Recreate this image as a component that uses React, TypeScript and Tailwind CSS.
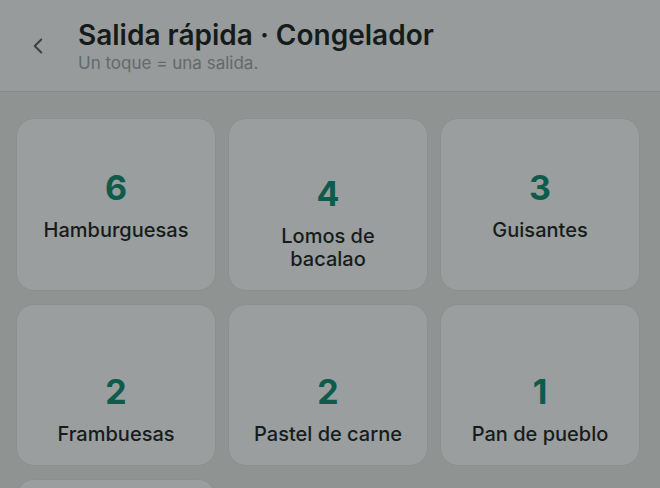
import { ChevronLeft } from 'lucide-react'

type Item = {
  name: string
  qty: number
}

const items: Item[] = [
  { name: 'Hamburguesas', qty: 6 },
  { name: 'Lomos de bacalao', qty: 4 },
  { name: 'Guisantes', qty: 3 },
  { name: 'Frambuesas', qty: 2 },
  { name: 'Pastel de carne', qty: 2 },
  { name: 'Pan de pueblo', qty: 1 },
  { name: 'Croquetas', qty: 1 },
]

function Tile({ item, row, wraps }: { item: Item; row: number; wraps: boolean }) {
  const layout =
    row === 0
      ? wraps
        ? 'h-[173px] justify-end pb-[19px]'
        : 'h-[173px] justify-center'
      : 'h-[162px] justify-end pb-[19px]'

  return (
    <button
      className={`flex flex-col items-center rounded-[18px] border border-[#8b908f] bg-[#9a9e9e] px-4 text-center ${layout}`}
    >
      <span className="text-[34px] font-bold leading-[40px] text-[#0e5b4b]">{item.qty}</span>
      <span className="mt-[11px] max-w-[158px] text-[20px] font-medium leading-[23px] text-[#161c1b]">
        {item.name}
      </span>
    </button>
  )
}

export default function App() {
  return (
    <div
      className="min-h-screen bg-[#8f9392]"
      style={{ fontFamily: 'Inter, "Noto Sans", sans-serif' }}
    >
      {/* Header */}
      <header className="flex h-[92px] items-center border-b border-[#868b8a] bg-[#979b9b] pl-6">
        <button className="flex w-7 items-center justify-center text-[#3a4140]">
          <ChevronLeft className="h-[26px] w-[26px]" strokeWidth={1.8} />
        </button>
        <div className="ml-[26px] flex flex-col">
          <h1 className="text-[28px] font-semibold leading-[34px] text-[#151b1a]">
            Salida rápida · Congelador
          </h1>
          <p className="mt-px text-[17px] leading-[20px] text-[#636a69]">Un toque = una salida.</p>
        </div>
      </header>

      {/* Grid */}
      <div className="grid w-[656px] grid-cols-3 gap-x-3 gap-y-[13px] px-4 pt-[26px]">
        {items.map((item, i) => (
          <Tile key={item.name} item={item} row={Math.floor(i / 3)} wraps={item.name.length > 15} />
        ))}
      </div>
    </div>
  )
}
